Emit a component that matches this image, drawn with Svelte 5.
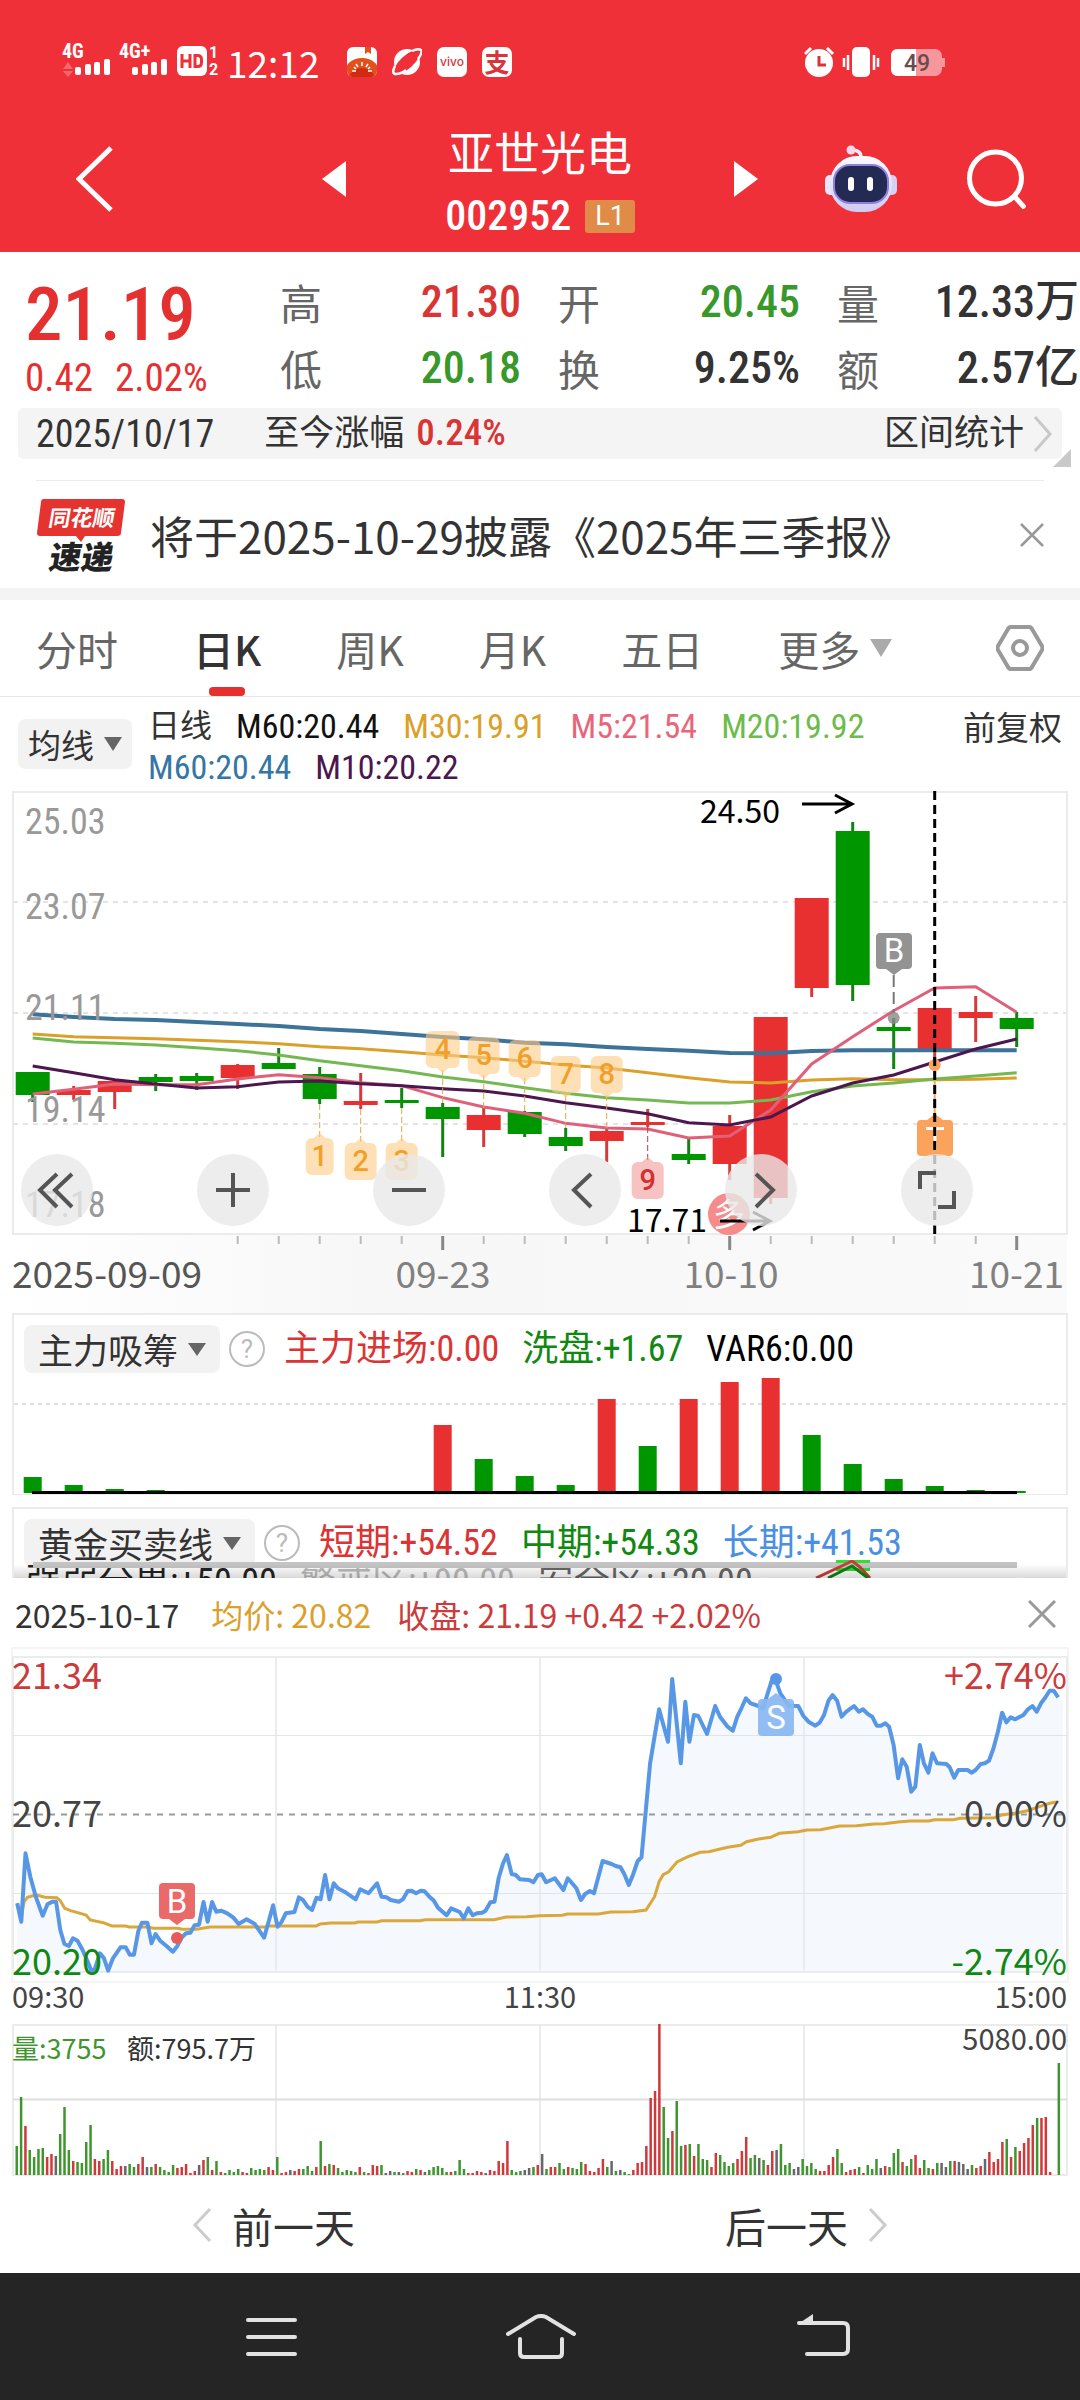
<script>
  const stats = [
    { label: '高', value: '21.30', tone: 'up' },
    { label: '开', value: '20.45', tone: 'down' },
    { label: '量', value: '12.33万', tone: '' },
    { label: '低', value: '20.18', tone: 'down' },
    { label: '换', value: '9.25%', tone: '' },
    { label: '额', value: '2.57亿', tone: '' },
  ];
  const tabs = ['分时', '日K', '周K', '月K', '五日'];
  const averages = [
    { text: 'M60:20.44', color: '#111' },
    { text: 'M30:19.91', color: '#dba02a' },
    { text: 'M5:21.54', color: '#e8657a' },
    { text: 'M20:19.92', color: '#6cbc4a' },
    { text: 'M60:20.44', color: '#3576a5' },
    { text: 'M10:20.22', color: '#4c164e' },
  ];

  const RED = '#e83030';
  const GREEN = '#009600';
  const dayX = (i) => 32.7 + i * 41;

  // [direction, body top, body bottom, wick top, wick bottom]
  const candles = [
    ['g', 1072, 1095, 1072, 1102], ['r', 1090, 1095, 1086, 1100], ['r', 1081, 1092, 1081, 1109],
    ['g', 1077, 1082, 1074, 1091], ['g', 1076, 1081, 1073, 1090], ['r', 1065, 1078, 1064, 1089],
    ['g', 1063, 1069, 1048, 1069], ['g', 1074, 1099, 1067, 1104], ['r', 1101, 1105, 1073, 1109],
    ['g', 1100, 1103, 1088, 1108], ['g', 1107, 1119, 1103, 1157], ['r', 1115, 1130, 1108, 1147],
    ['g', 1112, 1134, 1111, 1137], ['g', 1137, 1146, 1128, 1151], ['r', 1131, 1141, 1128, 1162],
    ['r', 1122, 1125, 1109, 1127], ['g', 1154, 1160, 1137, 1164], ['r', 1126, 1164, 1115, 1180],
    ['r', 1017, 1198, 1017, 1204], ['r', 898, 988, 898, 997], ['g', 831, 985, 822, 1001],
    ['g', 1027, 1031, 1018, 1069], ['r', 1008, 1049, 1008, 1063], ['r', 1012, 1018, 996, 1042],
    ['g', 1018, 1029, 1012, 1047],
  ];
  const maLines = [
    { color: '#3d7299', width: 4, y: [703, 711, 717, 720, 726, 732, 738, 747, 753, 762, 771, 778, 788, 793, 801, 807, 812, 819, 820, 813, 811, 811, 811, 811, 811] },
    { color: '#dba02a', width: 3, y: [762, 770, 773, 776, 781, 785, 791, 800, 806, 815, 825, 833, 844, 855, 864, 878, 893, 906, 909, 900, 896, 899, 899, 898, 894] },
    { color: '#74b852', width: 3, y: [774, 786, 790, 795, 803, 812, 825, 842, 857, 872, 891, 905, 923, 940, 953, 960, 969, 969, 960, 935, 918, 909, 897, 888, 878] },
    { color: '#e0607a', width: 3, y: [942, 928, 912, 914, 914, 897, 884, 893, 908, 917, 953, 981, 1000, 1030, 1044, 1047, 1074, 1068, 990, 852, 770, 692, 624, 620, 697] },
    { color: '#4c164e', width: 3, y: [858, 878, 899, 912, 924, 920, 906, 903, 911, 917, 926, 933, 948, 968, 984, 1001, 1028, 1035, 1011, 948, 909, 885, 846, 807, 777] },
  ];
  const maPoints = (ys) => ys.map((y, i) => `${dayX(i)},${780 + y / 3}`).join(' ');

  // numbered sequence markers: `below` hangs under the candle, otherwise it floats above
  const marks = [
    { n: 1, i: 7, top: 1138, below: true, from: 1104, w: 28 },
    { n: 2, i: 8, top: 1143, below: true, from: 1109, w: 32 },
    { n: 3, i: 9, top: 1143, below: true, from: 1108, w: 32 },
    { n: 4, i: 10, top: 1031, below: false, from: 1103, w: 34 },
    { n: 5, i: 11, top: 1037, below: false, from: 1108, w: 32 },
    { n: 6, i: 12, top: 1040, below: false, from: 1111, w: 32 },
    { n: 7, i: 13, top: 1056, below: false, from: 1128, w: 30 },
    { n: 8, i: 14, top: 1056, below: false, from: 1128, w: 32 },
    { n: 9, i: 15, top: 1162, below: true, from: 1127, w: 32, hot: true },
  ];
  const yLabels = [['25.03', 834], ['23.07', 919], ['21.11', 1020], ['19.14', 1122], ['17.18', 1217]];
  const ticks = Array.from({ length: 20 }, (_, k) => k + 5);

  const forceBars = [
    ['g', 1477], ['g', 1485], ['g', 1489], ['g', 1490], ['g', 1491], ['g', 1491], ['g', 1491], ['g', 1491],
    ['g', 1491], ['g', 1491], ['r', 1425], ['g', 1459], ['g', 1476], ['g', 1485], ['r', 1399], ['g', 1446],
    ['r', 1399], ['r', 1382], ['r', 1378], ['g', 1435], ['g', 1464], ['g', 1479], ['g', 1486], ['g', 1490], ['g', 1491],
  ];

  const priceTrace = '50,1030 62,1085 74,880 88,950 104,1010 124,1067 138,1033 152,1025 163,1025 175,1110 187,1152 200,1158 212,1135 225,1142 240,1170 255,1205 265,1232 275,1228 290,1180 302,1195 314,1232 328,1195 350,1162 365,1162 377,1184 389,1184 402,1112 412,1088 428,1088 440,1150 452,1122 465,1142 480,1155 502,1175 515,1158 527,1133 540,1120 553,1118 565,1096 578,1094 591,1026 603,1085 616,1026 628,1055 642,1052 660,1060 678,1073 693,1092 716,1078 740,1092 755,1115 767,1133 780,1085 793,1036 806,1100 818,1085 830,1060 855,1056 868,1012 880,1020 893,1040 906,1050 919,1013 931,1018 944,945 957,1018 969,970 981,985 1000,995 1033,1018 1046,988 1070,1000 1095,970 1108,1010 1122,1012 1135,1020 1158,1025 1170,1018 1184,993 1195,992 1208,1000 1222,992 1233,994 1247,1010 1260,1022 1272,1043 1297,1066 1310,1045 1335,1056 1347,1075 1360,1045 1373,1066 1385,1060 1400,1058 1410,1052 1424,1027 1436,1025 1448,955 1460,912 1472,885 1486,942 1498,945 1510,958 1537,960 1549,967 1562,945 1573,943 1586,967 1611,955 1636,990 1649,955 1674,985 1687,1020 1699,1002 1713,993 1725,1000 1750,903 1776,912 1788,918 1802,922 1813,942 1826,975 1838,945 1852,903 1863,892 1876,745 1888,610 1914,448 1940,545 1952,357 1977,610 1990,425 2002,545 2015,465 2028,468 2053,522 2077,438 2091,470 2113,500 2128,512 2141,470 2153,445 2166,415 2180,430 2203,438 2216,445 2228,405 2241,362 2253,362 2266,400 2290,437 2318,438 2333,468 2348,485 2368,497 2380,488 2393,465 2406,422 2418,405 2431,422 2444,470 2458,455 2480,438 2494,455 2506,448 2520,462 2533,470 2546,497 2558,497 2571,490 2582,500 2595,555 2608,655 2620,598 2633,620 2646,695 2658,680 2671,555 2683,610 2696,638 2708,580 2721,610 2748,612 2758,622 2771,653 2783,630 2810,630 2822,638 2833,630 2848,612 2860,610 2872,602 2885,565 2898,515 2910,458 2923,487 2935,472 2948,478 2972,465 2985,448 2998,438 3011,455 3023,430 3036,412 3048,392 3060,392 3073,412';
  const averageTrace = '50,1030 62,1070 70,1025 80,1012 105,1004 130,1012 165,1013 175,1022 188,1045 205,1052 250,1065 262,1080 300,1088 325,1098 365,1098 375,1101 430,1101 445,1105 515,1105 530,1108 570,1108 610,1101 770,1101 780,1098 918,1098 930,1092 960,1089 1030,1089 1040,1086 1095,1086 1108,1082 1220,1082 1235,1079 1435,1079 1470,1071 1530,1070 1568,1067 1633,1066 1648,1062 1738,1062 1773,1056 1838,1055 1876,1050 1901,1010 1914,965 1926,944 1942,935 1966,906 1998,890 2033,877 2058,875 2113,862 2151,856 2168,845 2203,837 2238,832 2263,820 2318,815 2343,810 2383,809 2438,798 2488,797 2538,792 2568,791 2608,786 2643,783 2698,783 2713,779 2768,779 2788,775 2888,773 2913,764 2953,759 2983,752 3018,740 3048,730 3073,725';
  const toPoints = (trace) =>
    trace.split(' ').map((p) => {
      const [x, y] = p.split(',').map(Number);
      return `${(x / 2.904).toFixed(1)},${(1560 + y / 3).toFixed(1)}`;
    }).join(' ');
  const pricePoints = toPoints(priceTrace);
  const averagePoints = toPoints(averageTrace);

  const volumeTrace = 'g29 g78 r49 g25 g18 g26 g27 r18 r21 k19 g41 g68 g25 r14 g13 g12 g33 g50 r16 r14 g16 g25 r14 r6 r9 k9 g11 g8 r11 r18 k8 g8 r11 g8 g5 g3 g10 r7 r8 r11 r2 r4 k10 r15 g18 r5 g14 r3 g2 g5 g3 g6 r3 r2 g7 g5 g6 g5 r8 r5 g18 r2 r3 k5 r4 r6 g6 g9 g4 r8 g34 r9 g11 r10 g7 g3 g5 g4 g3 r8 g3 r2 r10 r9 g10 k2 k4 g3 k3 g2 r4 r3 g6 r5 k3 g5 g8 g9 g7 g3 r3 g4 g15 g6 r2 r2 r4 r3 k2 r5 r4 r14 r12 r34 g5 g3 g4 k5 k7 g8 r10 k21 g6 r8 r8 g12 g6 r8 g7 g6 g13 r11 r4 r3 r7 r16 g8 k14 g4 k5 g3 g1 r5 r12 r13 r29 r77 r84 r151 g68 g37 r44 g74 g29 r30 g31 r19 g31 g16 g15 r8 r22 g20 g13 g9 g12 r16 r24 r38 g17 g20 k17 g15 r10 r24 k25 g31 g10 g12 k6 k8 g16 g9 g12 g6 r4 r4 r10 r18 g26 g12 r3 r5 r6 g8 r2 g10 g6 g16 k7 r9 g8 g22 g26 r13 g9 g16 r20 r7 g15 g7 r6 g12 k12 k8 g14 r14 k13 k11 k6 g10 r7 r9 k16 r23 r13 r16 r33 g36 r18 g28 r24 r32 r37 r50 g57 r57 r58 r3 g0 g112';
  const volumeColors = { g: '#3f962e', r: '#d0393b', k: '#66666c' };
  const volumes = volumeTrace.split(' ').map((v, i) => ({
    x: 15.5 + i * 4.342,
    h: Number(v.slice(1)),
    color: volumeColors[v[0]],
  }));
</script>

<main>
  <header class="top">
    <div class="status">
      <svg class="signals" width="160" height="52" viewBox="60 36 160 52">
        <g fill="#fff">
          <text class="tiny" x="62" y="58">4G</text>
          <text class="tiny" x="119" y="58">4G+</text>
          <rect x="75" y="67" width="6" height="8" rx="2" /><rect x="85" y="64" width="6" height="11" rx="2" />
          <rect x="94" y="62" width="6" height="13" rx="2" /><rect x="104" y="59" width="6" height="16" rx="2" />
          <rect x="132" y="67" width="6" height="8" rx="2" /><rect x="142" y="64" width="6" height="11" rx="2" />
          <rect x="151" y="62" width="6" height="13" rx="2" /><rect x="161" y="59" width="6" height="16" rx="2" />
          <rect x="177" y="46" width="30" height="30" rx="6" />
          <text class="sim" x="209" y="58">1</text>
          <text class="sim" x="209" y="75">2</text>
        </g>
        <path d="M63 69l5-7 5 7zM63 71l5 6 5-6z" fill="#f4686c" />
        <path d="M182 54v14M190 54v14M182 61h8M195 55.500v11h2.500q4 0 4-4v-3q0-4-4-4z" fill="none" stroke="#f03038" stroke-width="3" />
      </svg>
      <time>12:12</time>
      <div class="apps">
        <svg viewBox="0 0 30 30"><defs><clipPath id="rc"><rect width="30" height="30" rx="6" /></clipPath></defs>
          <g clip-path="url(#rc)"><rect width="30" height="30" fill="#fff" /><ellipse cx="15" cy="25" rx="17" ry="14" fill="#e2501c" /><ellipse cx="15" cy="30" rx="12" ry="9" fill="#d02a10" />
            <path d="M18 0h6v7l-3-2-3 2z" fill="#e2501c" />
            <path d="M15 15v4M9 17l2 3M21 17l-2 3M5 24h4M25 24h-4M7 20l2 2M23 20l-2 2" stroke="#fff" stroke-width="1.500" /></g></svg>
        <svg viewBox="0 0 30 30"><circle cx="15" cy="15" r="13" fill="#fff" /><ellipse cx="15" cy="15" rx="16" ry="6.500" transform="rotate(-42 15 15)" fill="#f03038" /><path d="M3 19Q-1 27 4 27Q9 27 14 23M26 12Q31 5 29 3Q26 1 20 4" fill="none" stroke="#fff" stroke-width="2.500" /></svg>
        <svg viewBox="0 0 30 30"><rect width="30" height="30" rx="7" fill="#fff" /><text class="vivo" x="15" y="19" text-anchor="middle">vivo</text></svg>
        <svg viewBox="0 0 30 30"><rect width="30" height="30" rx="7" fill="#fff" /><text class="zhi" x="15" y="25" text-anchor="middle">支</text></svg>
      </div>
      <svg class="device" width="142" height="32" viewBox="804 45 142 32">
        <g fill="none" stroke="#fff" stroke-width="3"><path d="M805 53l6-6M833 53l-6-6" /><path d="M844 57v9M848 54v15M878 57v9M874 54v15" stroke-width="2.500" /></g>
        <circle cx="819" cy="62" r="14" fill="#fff" /><path d="M819 55v9h7" fill="none" stroke="#d8343a" stroke-width="3" />
        <rect x="852" y="46" width="18" height="30" rx="5" fill="#fff" />
        <rect x="891" y="48" width="51" height="27" rx="7" fill="#f8979b" /><rect x="942" y="57" width="3" height="9" fill="#f8979b" />
        <path d="M898 48h18v27h-18q-7 0-7-7v-13q0-7 7-7z" fill="#fff" />
        <text class="batt" x="917" y="70" text-anchor="middle">49</text>
      </svg>
    </div>
    <div class="titlebar">
      <button class="back" aria-label="返回"><svg width="38" height="66" viewBox="0 0 38 66"><path d="M35 2L3 33l32 31" fill="none" stroke="#fff" stroke-width="5" /></svg></button>
      <div class="stock">
        <button aria-label="上一只"><svg width="24" height="36" viewBox="0 0 24 36"><path d="M0 18L24 0v36z" fill="#fff" /></svg></button>
        <div class="name">
          <h1>亚世光电</h1>
          <p>002952 <span>L1</span></p>
        </div>
        <button aria-label="下一只"><svg width="24" height="36" viewBox="0 0 24 36"><path d="M24 18L0 0v36z" fill="#fff" /></svg></button>
      </div>
      <div class="tools">
        <button aria-label="智能助手">
          <svg width="74" height="70" viewBox="824 142 74 70">
            <defs><linearGradient id="shell" x1="0" x2="0" y1="0" y2="1"><stop offset="0" stop-color="#fbfaff" /><stop offset="1" stop-color="#cfcbf2" /></linearGradient></defs>
            <path d="M851 148q10 0 10 7" fill="none" stroke="#efeafc" stroke-width="3.500" /><circle cx="851" cy="148" r="4.500" fill="#f3d9ea" />
            <rect x="825" y="173" width="12" height="20" rx="5" fill="#e9e6fa" /><rect x="885" y="173" width="12" height="20" rx="5" fill="#d5d0f4" />
            <rect x="830" y="154" width="62" height="56" rx="27" fill="url(#shell)" />
            <rect x="834" y="163" width="54" height="38" rx="16" fill="#232a54" stroke="#8f7fe0" stroke-width="2" />
            <rect x="848" y="175" width="6" height="14" rx="3" fill="#fff" /><rect x="867" y="175" width="6" height="14" rx="3" fill="#fff" />
          </svg>
        </button>
        <button aria-label="搜索"><svg width="60" height="60" viewBox="965 149 60 60"><circle cx="994.500" cy="178" r="26" fill="none" stroke="#fff" stroke-width="5" /><path d="M1013 196l11 12" stroke="#fff" stroke-width="5" /></svg></button>
      </div>
    </div>
  </header>

  <section class="quote">
    <div class="price">
      <strong>21.19</strong>
      <p><span>0.42</span><span>2.02%</span></p>
    </div>
    <dl>
      {#each stats as s}
        <div><dt>{s.label}</dt><dd class={s.tone}>{s.value}</dd></div>
      {/each}
    </dl>
  </section>

  <section class="range">
    <span class="num">2025/10/17</span>
    <span class="since">至今涨幅 <b>0.24%</b></span>
    <button>区间统计<svg width="20" height="36" viewBox="0 0 20 36"><path d="M2 1l15 17L2 35" fill="none" stroke="#c8c8c8" stroke-width="3" /></svg></button>
    <svg class="corner" width="18" height="18" viewBox="0 0 18 18"><path d="M18 0v18H0z" fill="#c9c9c9" /></svg>
  </section>

  <section class="news">
    <svg width="90" height="82" viewBox="36 493 90 82">
      <path d="M44 498h78q3 0 3 3l-4 31q0 3-4 3H85l-4 6-5-6H40q-3 0-3-3l4-31q0-3 3-3z" fill="#e5332f" />
      <text class="brand" x="140" y="525" transform="skewX(-10)" fill="#fff">同花顺</text>
      <text class="brand2" x="148" y="568" transform="skewX(-10)" fill="#222">速递</text>
    </svg>
    <a href="#report">将于2025-10-29披露《2025年三季报》</a>
    <button aria-label="关闭公告"><svg width="24" height="26" viewBox="0 0 24 26"><path d="M1 2l22 22M23 2L1 24" stroke="#999" stroke-width="2.500" /></svg></button>
  </section>

  <nav class="tabs">
    {#each tabs as tab}
      <button class:active={tab === '日K'}>{tab}</button>
    {/each}
    <button class="more">更多<svg width="22" height="18" viewBox="0 0 22 18"><path d="M0 0h22L11 18z" fill="#aaa" /></svg></button>
    <button class="gear" aria-label="设置"><svg width="48" height="48" viewBox="0 0 48 48"><path d="M15 3h18q2 0 3 2l10 17q1 2 0 4L36 43q-1 2-3 2H15q-2 0-3-2L2 26q-1-2 0-4L12 5q1-2 3-2z" fill="none" stroke="#999" stroke-width="4" /><circle cx="24" cy="24" r="7" fill="none" stroke="#999" stroke-width="4" /></svg></button>
  </nav>

  <section class="averages">
    <button class="chip">均线<svg width="18" height="14" viewBox="0 0 18 14"><path d="M0 0h18L9 14z" fill="#666" /></svg></button>
    <ul>
      <li class="cycle">日线</li>
      {#each averages as a}
        <li style:color={a.color}>{a.text}</li>
      {/each}
    </ul>
    <button class="adjust">前复权</button>
  </section>

  <section class="kline">
    <svg class="wide" viewBox="0 791 1080 522">
      <defs>
        <linearGradient id="axis" x1="0" x2="1" y1="0" y2="0"><stop offset="0" stop-color="#fff" /><stop offset=".35" stop-color="#f7f7f7" /><stop offset="1" stop-color="#fafafa" /></linearGradient>
        <clipPath id="plot"><rect x="0" y="791" width="1080" height="444" /></clipPath>
      </defs>
      <rect x="13" y="1235" width="1054" height="78" fill="url(#axis)" />
      <rect x="13" y="792" width="1054" height="442" fill="none" stroke="#ebebeb" stroke-width="2" />
      {#each [902, 1013, 1124] as y}
        <path d="M13 {y}H1066" stroke="#e4e4e4" stroke-width="2" stroke-dasharray="5 5" />
      {/each}
      {#each candles as [dir, top, bottom, high, low], i}
        <path d="M{dayX(i)} {high}V{low}" stroke={dir === 'r' ? '#d43a3a' : '#118311'} stroke-width="3" />
        <rect x={dayX(i) - 17} y={top} width="34" height={bottom - top} fill={dir === 'r' ? RED : GREEN} />
      {/each}
      {#each maLines as line}
        <polyline points={maPoints(line.y)} fill="none" stroke={line.color} stroke-width={line.width} />
      {/each}
      {#each yLabels as [text, y]}
        <text class="ylab" x="25" {y}>{text}</text>
      {/each}
      {#each marks as m}
        {@const x = dayX(m.i)}
        <path d="M{x} {m.from}V{m.below ? m.top : m.top + 38}" stroke={m.hot ? '#b04040' : '#dba84a'} stroke-width="1" stroke-dasharray="6 3" />
        <g fill={m.hot ? '#f09a9a' : '#fdcb87'} fill-opacity=".6">
          <rect x={x - m.w / 2} y={m.top} width={m.w} height="37" rx="6" />
          <path d={m.below ? `M${x - 6} ${m.top}l6-5 6 5z` : `M${x - 6} ${m.top + 37}l6 5 6-5z`} />
        </g>
        <text class="mark" {x} y={m.top + 28} fill={m.hot ? '#d22f2f' : '#f0a028'}>{m.n}</text>
      {/each}

      <path d="M893.700 975v38" stroke="#777" stroke-width="2" stroke-dasharray="12 5" />
      <circle cx="893.700" cy="1018" r="6" fill="#888" fill-opacity=".8" />
      <path d="M880 933h28q4 0 4 4v28q0 4-4 4h-6l-8 6-8-6h-6q-4 0-4-4v-28q0-4 4-4z" fill="#939393" />
      <text class="flag" x="894" y="962" fill="#fff">B</text>

      <path d="M934.700 1066v50" stroke="#fba35c" stroke-width="2" />
      <circle cx="934.700" cy="1065" r="6" fill="#fba35c" />
      <path d="M921 1120h6l8-6 8 6h6q4 0 4 4v28q0 4-4 4h-28q-4 0-4-4v-28q0-4 4-4z" fill="#fba35c" />
      <path d="M926 1128.500h18M935 1128v22" stroke="#fff" stroke-width="3" />

      <circle cx="729" cy="1214" r="21" fill="#f58b8b" clip-path="url(#plot)" />
      <text class="many" x="729" y="1226">多</text>
      <g stroke="#000" stroke-width="3" fill="none">
        <path d="M802 804h50M835 795l17 9-17 9M720 1221h50M753 1212l17 9-17 9" />
        <path d="M934.700 791V1235" stroke-dasharray="9 5" />
      </g>
      <text class="peak" x="700" y="823">24.50</text>
      <text class="peak" x="627" y="1232">17.71</text>

      {#each ticks as i}
        <path d="M{dayX(i)} 1236v{i === 10 || i === 17 || i === 24 ? 14 : 8}" stroke={i === 10 || i === 17 || i === 24 ? '#888' : '#bbb'} stroke-width={i === 10 || i === 17 || i === 24 ? 3 : 2} />
      {/each}
      <text class="date first" x="12" y="1288">2025-09-09</text>
      <text class="date" x="443" y="1288" text-anchor="middle">09-23</text>
      <text class="date" x="731" y="1288" text-anchor="middle">10-10</text>
      <text class="date" x="1064" y="1288" text-anchor="end">10-21</text>
    </svg>
    <div class="controls">
      <button aria-label="最早"><svg viewBox="0 0 72 72"><path d="M36 20L19 36l17 17M51 20L34 36l17 17" /></svg></button>
      <button aria-label="放大"><svg viewBox="0 0 72 72"><path d="M36 19v34M19 36h34" /></svg></button>
      <button aria-label="缩小"><svg viewBox="0 0 72 72"><path d="M19 36h34" /></svg></button>
      <button aria-label="左移"><svg viewBox="0 0 72 72"><path d="M42 20L25 36l17 17" /></svg></button>
      <button aria-label="右移"><svg viewBox="0 0 72 72"><path d="M31 20l17 16-17 17" /></svg></button>
      <button aria-label="全屏"><svg viewBox="0 0 72 72"><path d="M19 35V19h16M53 37v16H37" /></svg></button>
    </div>
  </section>

  <section class="panel">
    <div class="phead">
      <button class="chip">主力吸筹<svg width="18" height="13" viewBox="0 0 18 13"><path d="M0 0h18L9 13z" fill="#666" /></svg></button>
      <button class="help" aria-label="说明">?</button>
      <span class="up">主力进场:0.00</span><span class="deep">洗盘:+1.67</span><span class="black">VAR6:0.00</span>
    </div>
    <svg class="wide" viewBox="14 1376 1052 118">
      <path d="M14 1404H1066" stroke="#e0e0e0" stroke-width="2" stroke-dasharray="4 4" />
      {#each forceBars as [dir, top], i}
        <rect x={dayX(i) - 9} y={top} width="18" height={1493 - top} fill={dir === 'r' ? RED : GREEN} />
      {/each}
      <path d="M32 1492.500H1017" stroke="#000" stroke-width="3" />
    </svg>
  </section>

  <section class="panel cut">
    <div class="phead">
      <button class="chip">黄金买卖线<svg width="18" height="13" viewBox="0 0 18 13"><path d="M0 0h18L9 13z" fill="#666" /></svg></button>
      <button class="help" aria-label="说明">?</button>
      <span class="up">短期:+54.52</span><span class="deep">中期:+54.33</span><span class="blue">长期:+41.53</span>
    </div>
    <div class="zones"><span class="dark">强弱分界:+50.00</span><span class="pale">警戒区:+90.00</span><span class="grey">安全区:+20.00</span></div>
    <svg class="peakline" viewBox="14 1560 1052 18">
      <path d="M33 1565H1017" stroke="#c4c4c4" stroke-width="6" />
      <path d="M836 1561.500h34M836 1569.500h34" stroke="#33dd33" stroke-width="3" />
      <path d="M816 1578l32-15 4-2 8 6 10 11" fill="none" stroke="#cc3b3b" stroke-width="3" />
      <path d="M828 1578l24-12 16 12" fill="none" stroke="#118311" stroke-width="3" />
    </svg>
  </section>

  <section class="sheet">
    <div class="shead">
      <span>2025-10-17</span><span class="gold">均价: 20.82</span><span class="red">收盘: 21.19 +0.42 +2.02%</span>
      <button aria-label="关闭"><svg width="28" height="28" viewBox="0 0 28 28"><path d="M1 1l26 26M27 1L1 27" stroke="#999" stroke-width="3" /></svg></button>
    </div>
    <svg class="wide" viewBox="0 1647 1080 373">
      <rect x="12" y="1648" width="1056" height="334" fill="none" stroke="#f4f4f4" stroke-width="2" />
      <polygon points="{pricePoints} 1063,1700 1063,1973 17,1973" fill="#f5f9fe" />
      <path d="M13 1657H1067V1972H13zM276 1657V1972M540 1657V1972M804 1657V1972" fill="none" stroke="#ebecee" stroke-width="2" />
      <path d="M13 1735.500H1067M13 1893.500H1067" stroke="#e2e4e6" />
      <path d="M13 1814.500H1067" stroke="#999" stroke-width="2" stroke-dasharray="6 6" />
      <polyline points={averagePoints} fill="none" stroke="#dba63a" stroke-width="3" />
      <polyline points={pricePoints} fill="none" stroke="#5797e6" stroke-width="4" stroke-linejoin="round" />
      <g class="scale">
        <text x="12" y="1689" fill="#cc3b3b">21.34</text><text x="12" y="1827">20.77</text><text x="12" y="1975" fill="#118811">20.20</text>
        <g text-anchor="end"><text x="1067" y="1689" fill="#cc3b3b">+2.74%</text><text x="1067" y="1827">0.00%</text><text x="1067" y="1975" fill="#118811">-2.74%</text></g>
      </g>
      <circle cx="177" cy="1938" r="6" fill="#e85b5b" />
      <path d="M163 1883h28q4 0 4 4v28q0 4-4 4h-6l-8 6-8-6h-6q-4 0-4-4v-28q0-4 4-4z" fill="#ea6a6a" />
      <text class="flag" x="177" y="1913" fill="#fff">B</text>
      <circle cx="776" cy="1679" r="6" fill="#5797e6" />
      <path d="M762 1699h6l8-6 8 6h6q4 0 4 4v29q0 4-4 4h-28q-4 0-4-4v-29q0-4 4-4z" fill="#8ab8f2" fill-opacity=".93" />
      <text class="flag" x="776" y="1729" fill="#fff">S</text>
      <g class="times"><text x="12" y="2008">09:30</text><text x="540" y="2008" text-anchor="middle">11:30</text><text x="1067" y="2008" text-anchor="end">15:00</text></g>
    </svg>
    <svg class="wide" viewBox="0 2020 1080 156">
      <path d="M13 2175V2025H1067V2175zM276 2025V2175M540 2025V2175M804 2025V2175" fill="none" stroke="#ebebeb" stroke-width="2" />
      <path d="M13 2099.500H1067" stroke="#ddd" stroke-width="2" />
      {#each volumes as v}
        <rect x={v.x} y={2175 - v.h} width="2.500" height={v.h} fill={v.color} />
      {/each}
      <text class="vol" x="12" y="2059" fill="#3f962e">量:3755</text>
      <text class="vol" x="127" y="2059" fill="#333">额:795.7万</text>
      <text class="times" x="1067" y="2050" text-anchor="end">5080.00</text>
    </svg>
    <div class="days">
      <button><svg width="20" height="36" viewBox="0 0 20 36"><path d="M18 2L3 18l15 16" fill="none" stroke="#ccc" stroke-width="3" /></svg>前一天</button>
      <button>后一天<svg width="20" height="36" viewBox="0 0 20 36"><path d="M2 2l15 16L2 34" fill="none" stroke="#ccc" stroke-width="3" /></svg></button>
    </div>
  </section>

  <footer>
    <button aria-label="菜单"><svg width="78" height="46" viewBox="233 2314 78 46"><path d="M248 2320h47M248 2337h47M248 2354h47" stroke="#e2e2e2" stroke-width="4" stroke-linecap="round" /></svg></button>
    <button aria-label="主页"><svg width="78" height="46" viewBox="503 2314 78 46"><path d="M508 2334l28-17q5-2 10 0l28 17M520 2339v14q0 4 4 4h34q4 0 4-4v-14" fill="none" stroke="#e2e2e2" stroke-width="4" stroke-linecap="round" /></svg></button>
    <button aria-label="返回上级"><svg width="78" height="46" viewBox="773 2314 78 46"><path d="M799 2323h44q5 0 5 5v21q0 5-5 5h-36" fill="none" stroke="#e2e2e2" stroke-width="4" stroke-linecap="round" /><path d="M798 2324l15-10v10z" fill="#e2e2e2" /></svg></button>
  </footer>
</main>

<style>
  :global(body) { margin: 0; background: #fff; }
  main {
    color: #333;
    font-family: "Noto Sans CJK SC", "Noto Sans", sans-serif;
    font-size: 35px;
    line-height: 48px;
  }
  svg { display: block; flex: none; }
  .wide { width: 100%; height: auto; }
  button { margin: 0; padding: 0; border: 0; background: none; color: inherit; font: inherit; }
  h1, p, dl, dd, ul { margin: 0; padding: 0; }
  li { list-style: none; }
  .up, .range b { color: #da3434; }
  .down { color: #38982a; }
  .deep { color: #118811; }
  .blue { color: #4a90e2; }
  .black { color: #000; }

  .top { background: #f03038; color: #fff; }
  .status { display: flex; align-items: center; height: 104px; padding: 20px 134px 0 60px; box-sizing: border-box; }
  .tiny { font: 700 20px "Roboto Condensed", Roboto, sans-serif; }
  .sim { font: 700 16px Roboto, sans-serif; }
  .status time { margin-left: 7px; font-size: 37px; line-height: 40px; }
  .apps { display: flex; gap: 15px; margin-left: 28px; }
  .apps svg { width: 30px; height: 30px; }
  .vivo { font: 500 12px Inter, sans-serif; fill: #d8343a; }
  .zhi { font: 700 25px "Noto Sans CJK SC", sans-serif; fill: #d8343a; }
  .batt { font: 500 23px Roboto, sans-serif; fill: #6a4a4c; }
  .device { margin-left: auto; }

  .titlebar { display: grid; grid-template-columns: 1fr 436px 1fr; align-items: center; height: 148px; padding-top: 2px; box-sizing: border-box; }
  .back { justify-self: start; margin-left: 76px; }
  .stock { display: flex; align-items: center; justify-content: space-between; }
  .name { padding-top: 12px; text-align: center; }
  h1 { font-size: 46px; font-weight: 400; line-height: 62px; }
  .name p { display: flex; align-items: center; justify-content: center; gap: 14px; font: 500 42px/70px "Roboto Condensed", Roboto, sans-serif; }
  .name span { padding: 0 10px; border-radius: 3px; background: #e08c48; font: 400 27px/33px Roboto, sans-serif; }
  .tools { display: flex; align-items: center; justify-content: space-between; padding: 0 54px 0 66px; }

  .quote { display: flex; justify-content: space-between; height: 156px; padding-left: 25px; }
  .price { display: flex; flex-direction: column; justify-content: space-between; padding: 24px 0 7px; box-sizing: border-box; color: #e53030; font-family: "Roboto Condensed", Roboto, sans-serif; font-weight: 500; }
  .price strong { font-size: 75px; font-weight: 500; line-height: 76px; }
  .price p { display: flex; gap: 22px; font-size: 39px; line-height: 46px; font-weight: 400; }
  dl { display: grid; grid-template-columns: 241px 242px 242px; column-gap: 37px; align-content: start; width: 800px; padding-top: 17px; }
  dl div { display: flex; justify-content: space-between; align-items: center; height: 66px; }
  dt { color: #666; font-size: 42px; }
  dd { font: 500 44px/66px "Roboto Condensed", "Noto Sans CJK SC", sans-serif; white-space: nowrap; }

  .range { position: relative; display: flex; align-items: center; height: 51px; margin: 0 18px; padding: 0 9px 0 18px; border-radius: 6px; background: #f4f4f4; font-family: "Roboto Condensed", "Noto Sans CJK SC", sans-serif; }
  .num { font-size: 38px; }
  .since { margin-left: 50px; }
  .range b { margin-left: 4px; font-size: 37px; font-weight: 500; }
  .range button { display: flex; align-items: center; gap: 9px; margin-left: auto; }
  .corner { position: absolute; right: -9px; bottom: -8px; }

  .news { display: flex; align-items: center; height: 107px; margin: 21px 36px 0; border-top: 1px solid #ececec; }
  .news a { margin-left: 24px; color: #333; font-size: 44px; text-decoration: none; white-space: nowrap; }
  .news button { margin-left: auto; }
  .brand { font: 700 22px "Noto Sans CJK SC", sans-serif; }
  .brand2 { font: 900 32px "Noto Sans CJK SC", sans-serif; }

  .tabs { display: flex; align-items: stretch; gap: 75px; height: 96px; padding: 0 36px; border-top: 12px solid #f4f4f4; border-bottom: 1px solid #e8e8e8; color: #666; font-size: 41px; }
  .tabs button { position: relative; white-space: nowrap; }
  .active { color: #333; font-weight: 500; }
  .active::after { content: ""; position: absolute; bottom: 0; left: 50%; width: 36px; height: 9px; margin-left: -18px; border-radius: 4px; background: #e53030; }
  .more, .gear { display: flex; align-items: center; gap: 10px; }
  .tabs .gear { margin-left: auto; }

  .averages { display: flex; align-items: flex-start; height: 94px; padding: 9px 18px 0; box-sizing: border-box; }
  .chip { display: flex; align-items: center; gap: 10px; height: 48px; padding: 0 14px; border-radius: 8px; background: #f2f2f2; white-space: nowrap; }
  .averages .chip { height: 50px; margin-top: 13px; padding: 0 10px; font-size: 33px; }
  .averages ul { display: flex; flex: 1; flex-wrap: wrap; column-gap: 24px; max-width: 730px; margin-left: 16px; font: 400 34px/41px "Roboto Condensed", "Noto Sans CJK SC", sans-serif; }
  .averages .cycle { font-size: 32px; }
  .adjust { margin-left: auto; font-size: 33px; line-height: 41px; }

  .kline { position: relative; }
  .ylab { font: 400 36px "Roboto Condensed", Roboto, sans-serif; fill: #999; }
  .mark { font: 500 29px Roboto, sans-serif; text-anchor: middle; }
  .flag { font: 400 33px Roboto, sans-serif; text-anchor: middle; }
  .many { font: 400 32px "Noto Sans CJK SC", sans-serif; fill: #fff; text-anchor: middle; }
  .peak { font: 400 32px "Noto Sans CJK SC", sans-serif; fill: #000; }
  .date { font: 400 37px "Noto Sans CJK SC", sans-serif; fill: #808080; }
  .date.first { fill: #555; }
  .controls { position: absolute; left: 0; right: 0; bottom: 87px; display: flex; justify-content: space-between; padding: 0 107px 0 21px; }
  .controls button { width: 72px; height: 72px; border-radius: 50%; background: rgba(232, 232, 232, 0.8); }
  .controls path { fill: none; stroke: #555; stroke-width: 4; }

  .panel { position: relative; margin: 0 12px; border: 2px solid #ebebeb; border-bottom-width: 1px; }
  .phead { display: flex; align-items: center; height: 61px; padding: 10px 10px 3px; box-sizing: border-box; font: 400 36px/48px "Roboto Condensed", "Noto Sans CJK SC", sans-serif; white-space: nowrap; }
  .phead .chip { font: 400 35px/48px "Noto Sans CJK SC", sans-serif; }
  .help { width: 36px; height: 36px; margin: 0 -4px 0 9px; border: 2px solid #bbb; border-radius: 50%; color: #bbb; font: 400 26px/30px Roboto, sans-serif; }
  .phead span { margin-left: 23px; }
  .cut { height: 69px; margin-top: 12px; border-bottom: 0; overflow: hidden; }
  .cut::after { content: ""; position: absolute; left: -2px; right: -2px; bottom: 0; height: 14px; background: linear-gradient(rgba(0, 0, 0, 0), rgba(0, 0, 0, 0.15)); }
  .zones { display: flex; gap: 23px; margin-top: -8px; padding-left: 12px; font: 400 36px/40px "Roboto Condensed", "Noto Sans CJK SC", sans-serif; }
  .dark { color: #222; }
  .pale { color: #bbb; }
  .grey { color: #666; }
  .peakline { position: absolute; left: 0; bottom: 0; width: 100%; }

  .sheet { background: #fff; }
  .shead { display: flex; align-items: center; gap: 26px; height: 69px; padding: 2px 24px 0 15px; box-sizing: border-box; font-size: 32px; }
  .shead button { margin-left: auto; }
  .gold { margin-left: 6px; color: #dba02a; }
  .red { color: #cc3b3b; }
  .scale { font-size: 36px; fill: #444; }
  .times { font-size: 29px; fill: #444; }
  .vol { font-size: 27px; }
  .days { display: flex; justify-content: space-between; height: 97px; padding: 0 192px; font-size: 41px; }
  .days button { display: flex; align-items: center; gap: 20px; }

  footer { display: flex; justify-content: space-between; align-items: center; height: 127px; padding: 0 229px 0 233px; background: #252525; }
</style>
